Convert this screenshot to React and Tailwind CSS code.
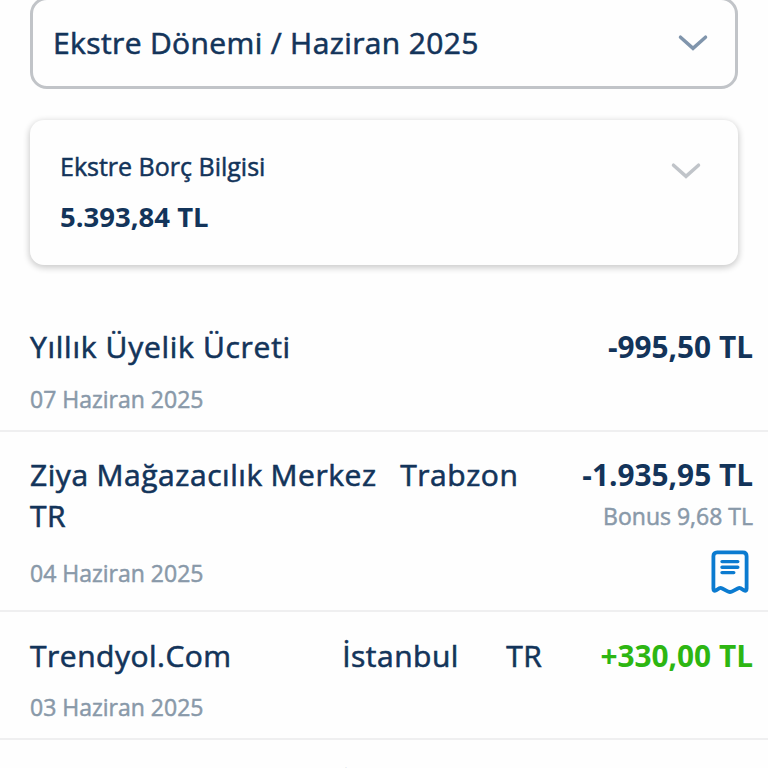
import React from "react";

const transactions = [
  {
    title: "Yıllık Üyelik Ücreti",
    spacing: "tracking-[0.73px] [word-spacing:-0.2px]",
    padding: "pt-[22px] pb-[15px]",
    dateMargin: "mt-[17px]",
    date: "07 Haziran 2025",
    amount: "-995,50 TL",
  },
  {
    title: "Ziya Mağazacılık Merkez   Trabzon      TR",
    spacing: "tracking-[0.55px] [word-spacing:-0.5px]",
    padding: "pt-[22px] pb-[15px]",
    dateMargin: "mt-[22px] mb-[6px]",
    date: "04 Haziran 2025",
    amount: "-1.935,95 TL",
    bonus: "Bonus 9,68 TL",
    receipt: true,
  },
  {
    title: "Trendyol.Com              İstanbul      TR",
    spacing: "tracking-[0.5px] [word-spacing:-0.4px]",
    padding: "pt-[23px] pb-[15px]",
    dateMargin: "mt-4",
    date: "03 Haziran 2025",
    amount: "+330,00 TL",
    income: true,
  },
  {
    title: "                                        İstanbul",
    spacing: "tracking-normal",
    padding: "pt-[23px] pb-[15px]",
    dateMargin: "mt-4",
  },
];

const Chevron = ({ className }) => (
  <svg className={className} width="30" height="18" viewBox="0 0 30 18" fill="none">
    <path d="M2.5 3.2L15 14.4L27.5 3.2" stroke="currentColor" strokeWidth="3.5" strokeLinecap="round" />
  </svg>
);

const ReceiptIcon = () => (
  <svg width="38" height="44" viewBox="0 0 38 44" fill="none" stroke="#0b7bd0" strokeLinecap="round" strokeLinejoin="round">
    <path
      d="M2.4 38.8V6.2Q2.4 2.4 6.2 2.4H31.8Q35.6 2.4 35.6 6.2V38.8Q35.6 41.8 33 40.4L29.5 38.2Q28.3 37.6 27.2 38.3L20.8 41.6Q19 42.4 17.2 41.6L10.8 38.3Q9.7 37.6 8.5 38.2L5 40.4Q2.4 41.8 2.4 38.8Z"
      strokeWidth="3.8"
    />
    <path d="M11 11.6H26.8M11 17.2H26.8M11 22.6H22.8" strokeWidth="3.4" />
  </svg>
);

const TransactionRow = ({ item }) => (
  <div className={`flex justify-between border-b-2 border-[#efeff0] pl-[30px] pr-[15px] ${item.padding}`}>
    <div className="w-[530px] shrink-0">
      <div className={`whitespace-pre-wrap text-[30px] leading-[41px] [-webkit-text-stroke:0.6px_currentColor] ${item.spacing}`}>
        {item.title}
      </div>
      <div className={`${item.dateMargin} text-[23px] leading-[31px] text-[#8999a9] [-webkit-text-stroke:0.5px_currentColor]`}>
        {item.date}
      </div>
    </div>
    <div className="flex flex-col items-end whitespace-nowrap">
      <div className={`text-[29.8px] leading-[41px] font-bold ${item.income ? "text-[#2db612]" : ""}`}>{item.amount}</div>
      {item.bonus && (
        <div className="mt-[6px] text-[23px] leading-[31px] text-[#8999a9] [-webkit-text-stroke:0.5px_currentColor]">{item.bonus}</div>
      )}
      {item.receipt && (
        <div className="mt-[18px] mr-[4px] -mb-2">
          <ReceiptIcon />
        </div>
      )}
    </div>
  </div>
);

const App = () => {
  return (
    <div className="h-[768px] w-[768px] overflow-hidden bg-[#fefefe] font-['Open_Sans',sans-serif] text-[#13345a]">
      {/* Statement period */}
      <div className="-mt-[3px] ml-[30px] flex h-[92px] w-[708px] items-center justify-between rounded-[17px] border-3 border-[#c1c4c8] pl-5 pr-[27px]">
        <span className="mb-[2px] text-[30px] leading-[41px] tracking-[0.4px] [word-spacing:-0.2px] [-webkit-text-stroke:0.6px_currentColor]">
          Ekstre Dönemi / Haziran 2025
        </span>
        <Chevron className="text-[#8095ac]" />
      </div>

      {/* Debt summary */}
      <div className="mt-[31px] ml-[30px] flex h-[145px] w-[708px] justify-between rounded-[14px] bg-[#fefefe] pl-[30px] pr-[37px] pt-[29px] shadow-[0_2px_6px_1px_rgba(0,0,0,0.2)]">
        <div>
          <div className="text-[25px] leading-[34px] [-webkit-text-stroke:0.5px_currentColor]">Ekstre Borç Bilgisi</div>
          <div className="mt-[15px] text-[27.5px] leading-[37px] font-bold">5.393,84 TL</div>
        </div>
        <Chevron className="mt-[13px] text-[#c0c4c9]" />
      </div>

      {/* Transactions */}
      <div className="mt-[39px]">
        {transactions.map((item, index) => (
          <TransactionRow key={index} item={item} />
        ))}
      </div>
    </div>
  );
};

export default App;
